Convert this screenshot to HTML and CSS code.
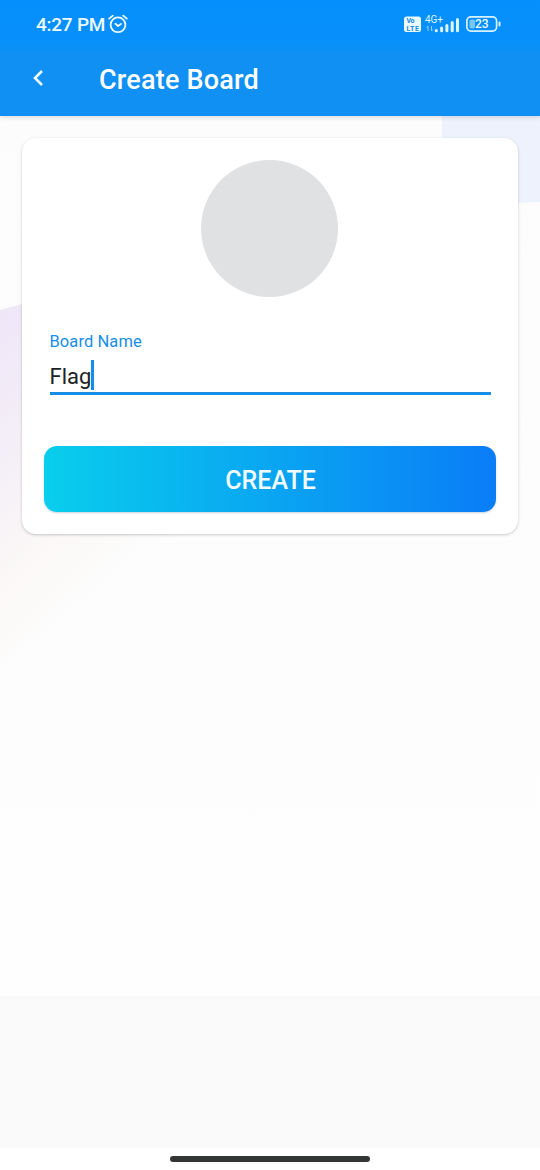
FILE: index.html
```
<!DOCTYPE html>
<html lang="en">
<head>
<meta charset="utf-8">
<title>Create Board</title>
<link rel="stylesheet" href="styles.css">
</head>
<body>
<div class="screen">
  <header class="header">
    <div class="status">
      <span class="clock">4:27 PM</span>
      <svg class="alarm" width="20" height="20" viewBox="0 0 20 20" fill="none" stroke="currentColor" stroke-width="1.8" stroke-linecap="round" stroke-linejoin="round">
        <circle cx="10" cy="10.8" r="7.4"/>
        <path d="M1.2 4.6 4.8 1.6M18.8 4.6 15.2 1.6M7.4 9.8 10 12l2.9-2.1"/>
      </svg>
      <svg class="indicators" width="98" height="24" viewBox="0 0 98 24">
        <rect x="0" y="4.5" width="17" height="15.5" rx="2.5" fill="#eafaff"/>
        <text class="volte" x="2.5" y="11.2" textLength="8">Vo</text>
        <text class="volte" x="2.5" y="18.8" textLength="12.5">LTE</text>
        <text class="network" x="21" y="10.8" textLength="18">4G+</text>
        <path d="M24 19v-5l-1.5 1.5M27.5 14v5l1.5-1.5" fill="none" stroke="#8ed0ff" stroke-width="1"/>
        <path d="M32.3 18.4v.4M37.6 16v2.8M42.9 13.5v5.3M48.2 10.5v8.3M53.5 7.5v11.3" fill="none" stroke="#dcf6ff" stroke-width="3" stroke-linecap="round"/>
        <rect x="62.9" y="4.9" width="29.7" height="14.2" rx="4" fill="none" stroke="#d8f3ff" stroke-width="1.7"/>
        <rect x="65.5" y="7.5" width="5.5" height="9" rx="2" fill="#7bc5fd"/>
        <path d="M95.5 10.5v3" stroke="#d8f3ff" stroke-width="2" stroke-linecap="round"/>
        <text class="charge" x="71" y="16.4" textLength="13.5">23</text>
      </svg>
    </div>
    <div class="appbar">
      <svg class="back" width="12" height="18" viewBox="0 0 12 18" fill="none" stroke="currentColor" stroke-width="2.6"><path d="M10 2 3 9l7 7"/></svg>
      <h1 class="title">Create Board</h1>
    </div>
  </header>
  <main class="content">
    <svg class="backdrop" width="540" height="880" viewBox="0 0 540 880">
      <defs>
        <linearGradient id="glow" gradientUnits="userSpaceOnUse" x1="0" y1="194" x2="199" y2="408">
          <stop offset="0" stop-color="#efe6f8"/>
          <stop offset=".38" stop-color="#f4eff7"/>
          <stop offset=".7" stop-color="#fbf8f7"/>
          <stop offset=".85" stop-color="#fcfbfa"/>
          <stop offset="1" stop-color="#fcfcfd" stop-opacity="0"/>
        </linearGradient>
        <linearGradient id="fade" x1="0" y1="0" x2="0" y2="1">
          <stop offset="0" stop-color="#fcfcfd"/>
          <stop offset="1" stop-color="#fefefe"/>
        </linearGradient>
      </defs>
      <path d="M0 0h540v880H0z" fill="url(#fade)"/>
      <path d="M0 194 22 188 540 48V880H0z" fill="url(#glow)"/>
      <path d="M442 0h98v86l-98 4z" fill="#edf2fc"/>
    </svg>
    <section class="card">
      <div class="avatar"></div>
      <div class="field">
        <div class="label">Board Name</div>
        <div class="value">Flag<span class="caret"></span></div>
      </div>
      <button class="create">CREATE</button>
    </section>
  </main>
  <div class="lower"></div>
  <footer class="nav"><div class="handle"></div></footer>
</div>
</body>
</html>
```
FILE: styles.css
```
* { box-sizing: border-box; }
body { margin: 0; font-family: Roboto, sans-serif; }
.screen { width: 540px; height: 1170px; display: flex; flex-direction: column; overflow: hidden; background: #fff; }
.header { height: 116px; flex: none; color: #effaff; background: linear-gradient(#058ffc 0, #0790fb 40px, #0f90f2 54px, #0f90f2 100%); box-shadow: 0 1px 5px rgba(0,0,0,.16); z-index: 1; }
.status { height: 43px; display: flex; align-items: flex-start; padding: 12px 38px 0 36px; }
.clock { font-size: 19px; line-height: 26px; width: 72px; letter-spacing: -.25px; font-weight: 500; white-space: nowrap; }
.alarm { margin-top: 2px; }
.indicators { margin-left: auto; }
.volte { font: 700 7px Roboto, sans-serif; fill: #1689e2; }
.network { font: 400 10px Roboto, sans-serif; fill: #dff5ff; }
.charge { font: 500 12px Roboto, sans-serif; fill: #effaff; }
.appbar { height: 73px; display: flex; align-items: center; padding: 0 32px 2px; }
.back { flex: none; margin-top: -2px; }
.title { margin: 2px 0 0 55px; font-size: 27px; line-height: 36px; font-weight: 500; letter-spacing: .2px; color: #fff; }
.content { height: 880px; flex: none; display: grid; }
.backdrop { grid-area: 1 / 1; display: block; }
.card { grid-area: 1 / 1; margin: 22px; width: 496px; height: 396px; padding: 22px; border-radius: 14px; background: #fff; box-shadow: 0 1px 3px rgba(0,0,0,.21); display: flex; flex-direction: column; align-items: center; z-index: 1; }
.avatar { width: 137px; height: 137px; flex: none; margin-right: 1px; border-radius: 50%; background: #e0e1e3; }
.field { width: 441px; height: 65px; margin-top: 33px; border-bottom: 3px solid #168ee8; }
.label { font-size: 16.5px; line-height: 24px; color: #168ee8; letter-spacing: .08px; }
.value { display: flex; align-items: center; margin-top: 5px; height: 32px; font-size: 22px; line-height: 31px; color: #202124; padding-top: 2px; }
.caret { width: 3px; height: 30px; margin: -2px 0 0 -.5px; background: #168ee8; }
.create { width: 452px; height: 66px; flex: none; margin-top: 51px; padding: 3px 0 0 1px; border: 0; border-radius: 13px; font: 500 25px/32px Roboto, sans-serif; color: #f3fcff; background: linear-gradient(90deg, #09ceec, #0a7df7); box-shadow: 0 1px 2px rgba(0,60,100,.22); }
.lower { height: 152px; flex: none; background: #fafafa; }
.nav { flex: 1; display: flex; justify-content: center; padding-top: 8px; }
.handle { width: 200px; height: 6px; border-radius: 3px; background: #333635; }
```
